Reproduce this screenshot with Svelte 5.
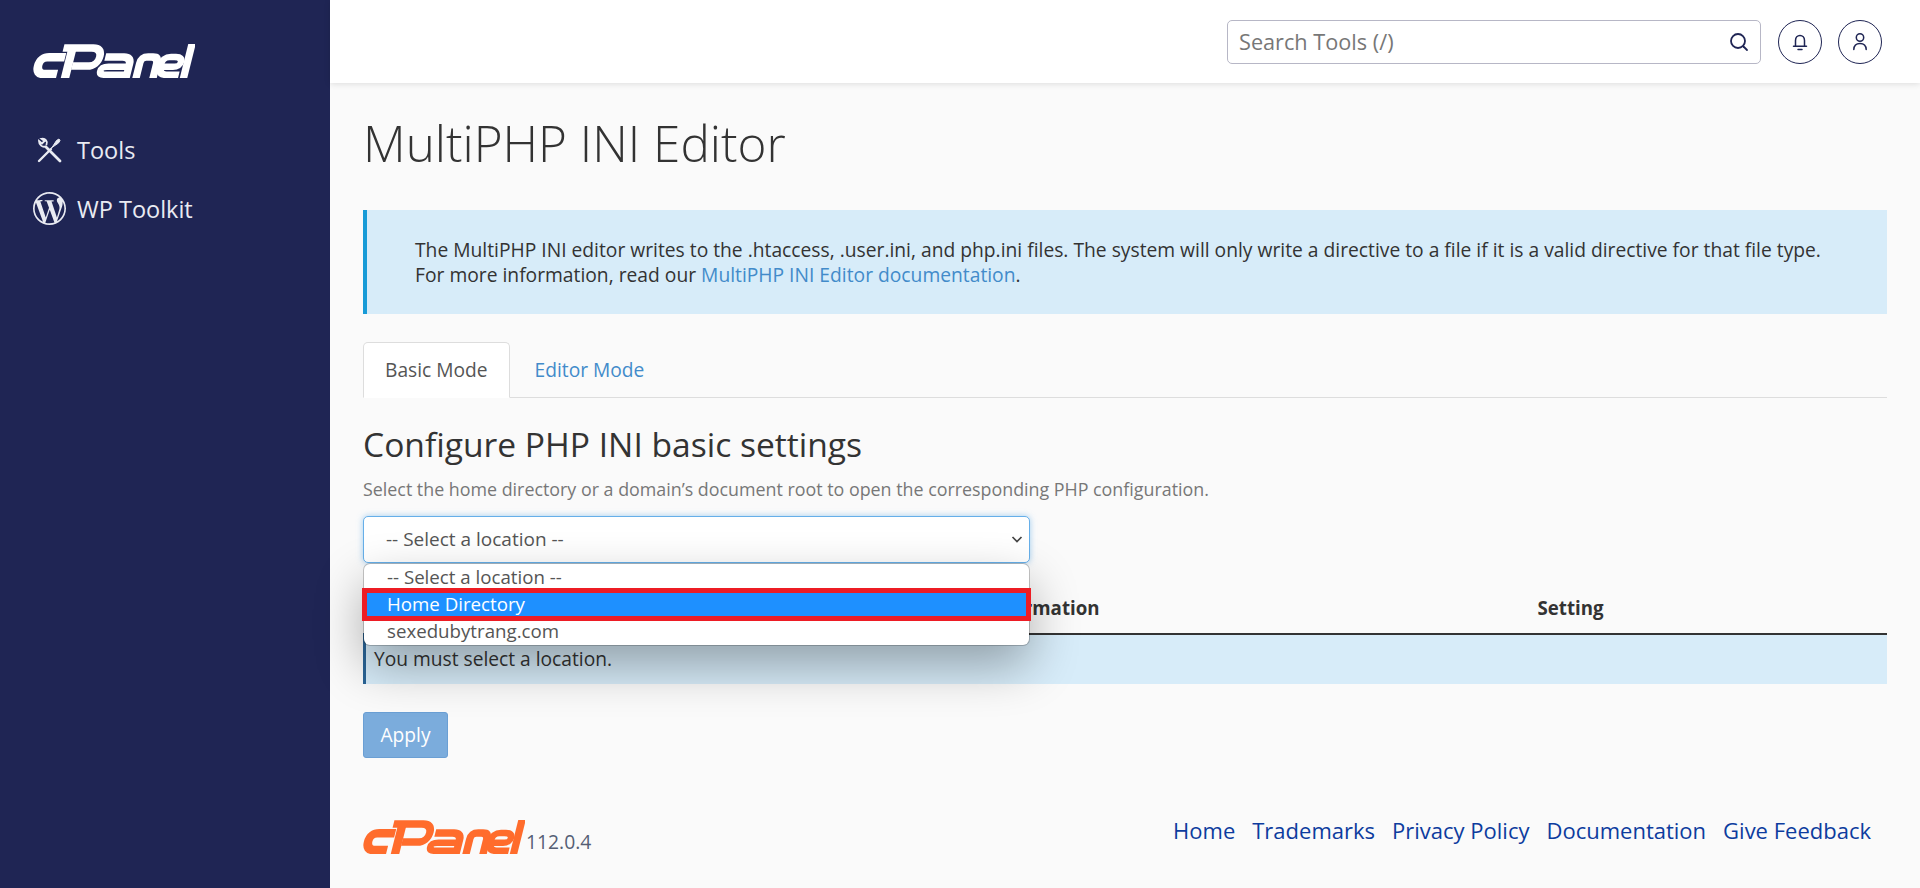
<script>
	let links = ["Home", "Trademarks", "Privacy Policy", "Documentation", "Give Feedback"];
</script>

{#snippet logo()}
	<svg class="logo" viewBox="0 0 162 34" fill="none" stroke="currentColor" stroke-width="7" stroke-linejoin="round">
		<g transform="translate(8.500 0) skewX(-14)">
			<path d="M27 13.300H10C5 13.300 2 16 2 21.500C2 27 5 30 10 30H23" stroke-width="8.500" />
			<path d="M23 4H52C58 4 61.500 7 61.500 12.500C61.500 18.500 58 22 52 22H36" stroke-width="7.500" />
			<path d="M32 4V34" stroke-width="8.500" />
			<path d="M67 13H85C90 13 93 15.500 93 20V34" stroke-width="7.500" />
			<path d="M93 22.800H72C68 22.800 65.500 24 65.500 26.800C65.500 29.800 68 30.800 72 30.800H93" stroke-width="6.500" />
			<path d="M103 34V19C103 15 105 13 109 13H114C118 13 120 15 120 19V34" stroke-width="7.500" />
			<path d="M145 30.800H132C127 30.800 124.500 27.500 124.500 21.500C124.500 16 127 13 132 13H137C142 13 144 15.500 144 18C144 21 142 22.800 138 22.800H126" stroke-width="6.500" />
			<path d="M150.500 0V34" stroke-width="7.500" />
		</g>
	</svg>
{/snippet}

<div class="page">
	<aside class="sidebar">
		<div class="brand">{@render logo()}</div>
		<nav>
			<a class="nav-item" href="#tools">
				<span class="nav-icon tools">
					<svg width="26" height="26" viewBox="0 0 26 26" fill="none" stroke="#e9ebf2" stroke-linecap="round">
						<path d="M3 24L15 12" stroke-width="2.400" />
						<path d="M16 10.500L20.500 3.500L23 2L24 3.500L22.500 6L15.500 10.800Z" fill="#e9ebf2" stroke-width="1" />
						<path d="M24 24L10 10" stroke-width="2.800" />
						<path d="M9.500 9.500C6.500 10.500 3 8 3 4L6 6.500L8.500 4L5.500 1.800C9.500 1 12 4.500 10.500 7.500" stroke-width="1.800" />
					</svg>
				</span>
				Tools
			</a>
			<a class="nav-item" href="#wp">
				<span class="nav-icon">
					<svg width="33" height="33" viewBox="0 0 24 24" fill="#e9ebf2">
						<path d="M21.469 6.825c.84 1.537 1.318 3.3 1.318 5.175 0 3.979-2.156 7.456-5.363 9.325l3.295-9.527c.615-1.54.82-2.771.82-3.864 0-.405-.026-.78-.07-1.11m-7.981.105c.647-.03 1.232-.105 1.232-.105.582-.075.514-.93-.067-.899 0 0-1.755.135-2.88.135-1.064 0-2.85-.15-2.85-.15-.585-.03-.661.855-.075.885 0 0 .54.061 1.125.09l1.68 4.605-2.37 7.08L5.354 6.9c.649-.03 1.234-.1 1.234-.1.585-.075.516-.93-.065-.896 0 0-1.746.138-2.874.138-.2 0-.438-.008-.69-.015C4.911 3.15 8.235 1.215 12 1.215c2.809 0 5.365 1.072 7.286 2.833-.046-.003-.091-.009-.141-.009-1.06 0-1.812.923-1.812 1.914 0 .89.513 1.643 1.06 2.531.411.72.89 1.643.89 2.977 0 .915-.354 1.994-.821 3.479l-1.075 3.585-3.9-11.61.001.014zM12 22.784c-1.059 0-2.081-.153-3.048-.437l3.237-9.406 3.315 9.087c.024.053.05.101.078.149-1.12.393-2.325.609-3.582.609M1.211 12c0-1.564.336-3.05.935-4.39L7.29 21.709C3.694 19.96 1.212 16.271 1.211 12M12 0C5.385 0 0 5.385 0 12s5.385 12 12 12 12-5.385 12-12S18.615 0 12 0" />
					</svg>
				</span>
				WP Toolkit
			</a>
		</nav>
	</aside>

	<div class="right">
		<header class="topbar">
			<div class="search">
				<span class="placeholder">Search Tools (/)</span>
				<svg width="22" height="22" viewBox="0 0 22 22" fill="none" stroke="#1f2554" stroke-width="1.800" stroke-linecap="round">
					<circle cx="10" cy="10" r="7" />
					<path d="M15.500 15.500L19 19" />
				</svg>
			</div>
			<button class="circle" aria-label="Notifications">
				<svg width="20" height="20" viewBox="0 0 20 20" fill="none" stroke="#1f2554" stroke-width="1.500" stroke-linecap="round">
					<path d="M5.500 14V8.500C5.500 5.500 7.500 3.500 10 3.500C12.500 3.500 14.500 5.500 14.500 8.500V14" />
					<path d="M3.500 14.200H16.500M8 17.500H12" />
				</svg>
			</button>
			<button class="circle" aria-label="Account">
				<svg width="20" height="22" viewBox="0 0 20 22" fill="none" stroke="#1f2554" stroke-width="1.500" stroke-linecap="round">
					<circle cx="10" cy="6.500" r="3.700" />
					<path d="M3.800 18.500C4 14 6.500 12.500 10 12.500C13.500 12.500 16 14 16.200 18.500" />
				</svg>
			</button>
		</header>

		<main class="content">
			<h1>MultiPHP INI Editor</h1>

			<div class="alert">
				The MultiPHP INI editor writes to the .htaccess, .user.ini, and php.ini files. The system will only write a directive to a file if it is a valid directive for that file type.<br />
				For more information, read our <a href="#docs">MultiPHP INI Editor documentation</a>.
			</div>

			<div class="tabs">
				<a class="tab active" href="#basic">Basic Mode</a>
				<a class="tab" href="#editor">Editor Mode</a>
			</div>

			<h2>Configure PHP INI basic settings</h2>
			<p class="hint">Select the home directory or a domain’s document root to open the corresponding PHP configuration.</p>

			<div class="select-wrap">
				<div class="select">
					<span>-- Select a location --</span>
					<svg width="14" height="14" viewBox="0 0 14 14" fill="none" stroke="#444" stroke-width="1.700">
						<path d="M2.500 5L7 9.500L11.500 5" />
					</svg>
				</div>
				<div class="dropdown">
					<div class="opt">-- Select a location --</div>
					<div class="opt hl">Home Directory</div>
					<div class="opt">sexedubytrang.com</div>
				</div>
			</div>

			<table>
				<thead>
					<tr>
						<th class="c1">PHP Directive</th>
						<th class="c2">Information</th>
						<th>Setting</th>
					</tr>
				</thead>
				<tbody>
					<tr><td colspan="3">You must select a location.</td></tr>
				</tbody>
			</table>

			<button class="apply">Apply</button>

			<footer>
				<div class="foot-brand">
					{@render logo()}
					<span class="version">112.0.4</span>
				</div>
				<div class="foot-links">
					{#each links as l}
						<a href="#x">{l}</a>
					{/each}
				</div>
			</footer>
		</main>
	</div>
</div>

<style>
	:global(body) {
		margin: 0;
		font-family: "Open Sans", sans-serif;
		background: #fafafa;
		color: #333;
	}
	a {
		text-decoration: none;
	}
	.page {
		display: flex;
		height: 888px;
		overflow: hidden;
	}
	.sidebar {
		width: 330px;
		flex: none;
		background: #1f2554;
		color: #fff;
	}
	.brand {
		padding: 44px 0 0 33px;
		height: 78px;
	}
	.logo {
		display: block;
		width: 162px;
		height: 34px;
	}
	nav {
		display: flex;
		flex-direction: column;
		gap: 24px;
		margin-top: 10px;
	}
	.nav-item {
		display: flex;
		align-items: center;
		height: 35px;
		padding-left: 33px;
		color: #e9ebf2;
		font-size: 23.5px;
	}
	.nav-icon {
		width: 44px;
		display: flex;
		align-items: center;
	}
	.nav-icon.tools {
		padding-left: 3px;
		width: 41px;
	}
	.right {
		flex: 1;
		min-width: 0;
	}
	.topbar {
		height: 83px;
		background: #fff;
		box-shadow: 0 1px 6px rgba(0, 0, 0, 0.12);
		display: flex;
		align-items: center;
		justify-content: flex-end;
		gap: 16px;
		padding: 0 38px 0 0;
		position: relative;
	}
	.search {
		height: 42px;
		border: 1px solid #b7b7c6;
		border-radius: 5px;
		display: flex;
		align-items: center;
		justify-content: space-between;
		padding: 0 10px 0 11px;
		margin-right: 1px;
		box-sizing: content-box;
		width: 511px;
	}
	.placeholder {
		font-size: 21.7px;
		color: #777;
	}
	.circle {
		width: 44px;
		height: 44px;
		border: 1px solid #1f2554;
		border-radius: 50%;
		background: #fff;
		padding: 0;
		display: flex;
		align-items: center;
		justify-content: center;
	}
	.content {
		padding: 0 33px;
	}
	h1 {
		font-size: 49.4px;
		font-weight: 300;
		line-height: 66px;
		margin: 27px 0 0;
		color: #333;
	}
	.alert {
		margin-top: 34px;
		background: #d7ecf9;
		border-left: 4px solid #179bd7;
		padding: 27px 48px 27px;
		font-size: 19.25px;
		line-height: 25px;
	}
	.alert a,
	.tab {
		color: #428bca;
	}
	.tabs {
		display: flex;
		margin-top: 28px;
		border-bottom: 1px solid #ddd;
		height: 55px;
	}
	.tab {
		font-size: 19.2px;
		padding: 0 21px 2px;
		display: flex;
		align-items: center;
		border: 1px solid transparent;
		margin-bottom: -1px;
		margin-right: 3px;
	}
	.tab.active {
		color: #555;
		background: #fff;
		border-color: #ddd;
		border-bottom-color: #fff;
		border-radius: 5px 5px 0 0;
	}
	h2 {
		font-size: 33.6px;
		font-weight: 400;
		line-height: 44px;
		margin: 24px 0 0;
		color: #333;
	}
	.hint {
		font-size: 17.85px;
		line-height: 24px;
		color: #777;
		margin: 11px 0 0;
	}
	.select-wrap {
		position: relative;
		width: 667px;
		margin-top: 15px;
	}
	.select {
		height: 47px;
		box-sizing: border-box;
		border: 1px solid #66afe9;
		border-radius: 5px;
		background: #fff;
		box-shadow: 0 0 6px rgba(102, 175, 233, 0.6);
		display: flex;
		align-items: center;
		justify-content: space-between;
		padding: 0 5px 2px 22px;
		font-size: 19px;
		color: #555;
	}
	.dropdown {
		position: absolute;
		left: 1px;
		right: 1px;
		top: 48px;
		background: #fff;
		border-radius: 6px;
		box-shadow: 0 0 0 1px rgba(0, 0, 0, 0.2), 0 20px 50px rgba(0, 0, 0, 0.33);
		z-index: 5;
	}
	.opt {
		height: 27px;
		line-height: 25px;
		padding-left: 23px;
		font-size: 18.7px;
		color: #555;
		position: relative;
	}
	.opt.hl {
		background: #1e90ff;
		color: #fff;
	}
	.opt.hl::after {
		content: "";
		position: absolute;
		left: -2px;
		right: -2px;
		top: -3px;
		bottom: -3px;
		border: 5px solid #ed1c24;
	}
	table {
		width: 100%;
		border-collapse: collapse;
		margin-top: 13px;
		table-layout: fixed;
	}
	th {
		text-align: left;
		font-size: 18.7px;
		font-weight: 700;
		height: 52px;
		padding: 5px 8px 0;
		border-bottom: 2px solid #333;
	}
	.c1 {
		width: 598px;
	}
	.c2 {
		width: 535px;
	}
	td {
		background: #d7ecf9;
		border-left: 3px solid #2a6496;
		height: 47px;
		padding: 0 8px 2px;
		font-size: 19.2px;
	}
	.apply {
		display: block;
		margin-top: 28px;
		width: 85px;
		height: 46px;
		background: #7bacdc;
		border: 1px solid #6a9fd4;
		border-radius: 3px;
		color: #fff;
		font-family: inherit;
		font-size: 19.2px;
		padding: 0 0 2px;
	}
	footer {
		display: flex;
		justify-content: space-between;
		align-items: flex-start;
		margin-top: 62px;
		padding-right: 16px;
	}
	.foot-brand {
		display: flex;
		align-items: flex-end;
		gap: 1px;
		color: #ff6c2c;
	}
	.version {
		color: #555e74;
		font-size: 19.3px;
		line-height: 24px;
	}
	.foot-links {
		display: flex;
		gap: 17px;
		font-size: 22px;
		margin-top: -5px;
	}
	.foot-links a {
		color: #0d3c9e;
	}
</style>
